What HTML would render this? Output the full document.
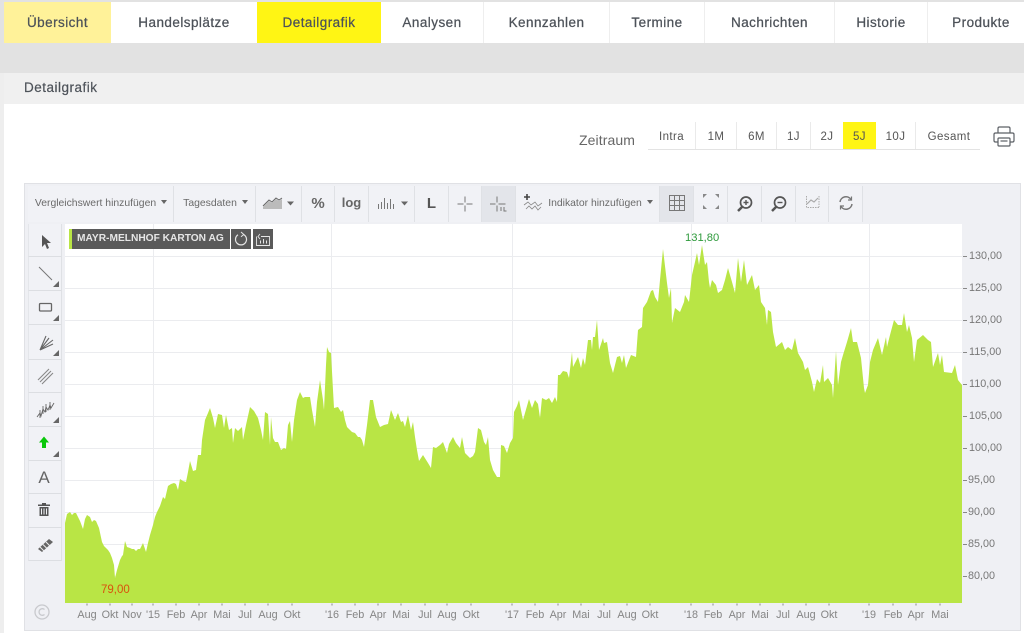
<!DOCTYPE html>
<html lang="de"><head><meta charset="utf-8"><title>Detailgrafik</title>
<style>
*{box-sizing:border-box}
html,body{margin:0;padding:0}
html{background:#fff}
body{width:1024px;height:633px;overflow:hidden;position:relative;background:#fff;font-family:"Liberation Sans",sans-serif;filter:blur(.35px)}
.a{position:absolute}
.tab{position:absolute;top:2px;height:41px;line-height:41px;text-align:center;font-size:13.5px;color:#4d5259;background:#fff;border-right:1px solid #eee;letter-spacing:.45px;-webkit-text-stroke:.25px #4d5259}
.z{position:absolute;top:122px;height:27px;line-height:30px;text-align:center;font-size:11.5px;color:#555;border-right:1px solid #eaeaea;letter-spacing:.4px}
.tb{position:absolute;top:186px;height:36px;background:#f1f2f6;border-right:1px solid #dfe1e5;color:#6a6a6a;font-size:10.4px;line-height:36px;text-align:center;white-space:nowrap}
.car{display:inline-block;width:0;height:0;border-left:3.5px solid transparent;border-right:3.5px solid transparent;border-top:4px solid #666;vertical-align:2px;margin-left:5px}
.lb{position:absolute;left:28px;width:34px;background:#f1f2f6;border-bottom:1px solid #dcdee2;border-right:1px solid #dfe1e5;border-left:1px solid #e4e6ea}
.cor{position:absolute;right:2px;bottom:3px;width:0;height:0;border-left:6px solid transparent;border-bottom:6px solid #666}
.lb svg{position:absolute;left:0;top:0}
.x{position:absolute;top:609px;font-size:10.8px;color:#858585;width:40px;text-align:center;line-height:13px}
.y{position:absolute;left:969px;font-size:10.8px;color:#777;line-height:12px}
</style></head><body>
<div class="a" style="left:0;top:0;width:1024px;height:73px;background:#e2e2e2"></div>
<div class="a" style="left:0;top:2px;width:4px;height:41px;background:#e2e2e2"></div>
<div class="tab" style="left:4px;width:107px;background:#fff299;border:0">Übersicht</div>
<div class="tab" style="left:111px;width:146px;border:0">Handelsplätze</div>
<div class="tab" style="left:257px;width:124px;background:#fff514;border:0">Detailgrafik</div>
<div class="tab" style="left:381px;width:103px">Analysen</div>
<div class="tab" style="left:484px;width:126px">Kennzahlen</div>
<div class="tab" style="left:610px;width:95px">Termine</div>
<div class="tab" style="left:705px;width:130px">Nachrichten</div>
<div class="tab" style="left:835px;width:93px">Historie</div>
<div class="tab" style="left:928px;width:106px;border:0">Produkte</div>

<div class="a" style="left:4px;top:73px;width:1020px;height:31px;background:#f0f0f0;color:#4d5259;font-size:13.5px;line-height:29px;padding-left:20px;letter-spacing:.5px;-webkit-text-stroke:.2px #4d5259">Detailgrafik</div>
<div class="a" style="left:0;top:73px;width:4px;height:560px;background:#eee"></div>

<div class="a" style="left:579px;top:132px;font-size:14px;color:#666;letter-spacing:.1px;line-height:16px">Zeitraum</div>
<div class="a" style="left:648px;top:149px;width:332px;height:1px;background:#e3e3e3"></div>
<div class="z" style="left:648px;width:48px">Intra</div>
<div class="z" style="left:696px;width:41px">1M</div>
<div class="z" style="left:737px;width:40px">6M</div>
<div class="z" style="left:777px;width:34px">1J</div>
<div class="z" style="left:811px;width:32px;border:0">2J</div>
<div class="z" style="left:843px;width:33px;background:#fff514;border:0">5J</div>
<div class="z" style="left:876px;width:40px">10J</div>
<div class="z" style="left:916px;width:66px;border:0">Gesamt</div>
<svg class="a" style="left:992px;top:125px" width="24" height="24" viewBox="0 0 24 24" fill="none" stroke="#5c6066" stroke-width="1.2"><path d="M6 8V3.500Q6 2 7.500 2H16.500Q18 2 18 3.500V8"/><path d="M6 17H3.500Q2 17 2 15.500V9.500Q2 8 3.500 8H20.500Q22 8 22 9.500V15.500Q22 17 20.500 17H18"/><rect x="6" y="13" width="12" height="8" rx="1"/><path d="M8.500 16H15.500"/></svg>

<!-- chart frame -->
<div class="a" style="left:24px;top:183px;width:997px;height:448px;background:#eff0f4;border:1px solid #e0e1e5"></div>

<!-- top toolbar -->
<div class="tb" style="left:28px;width:146px;padding-left:1px">Vergleichswert hinzufügen<i class="car"></i></div>
<div class="tb" style="left:174px;width:82px;padding-left:2px">Tagesdaten<i class="car"></i></div>
<div class="tb" style="left:256px;width:46px"></div>
<svg class="a" style="left:262px;top:194px" width="36" height="20" viewBox="0 0 36 20"><path d="M1 13 7 7 10 9 14 5 17 7 20 5V15H1Z" fill="#bbb"/><path d="M1 12 7 6 10 8 14 4 17 6 20 4" fill="none" stroke="#666" stroke-width="1"/><path d="M25 7.500H32L28.500 11.500Z" fill="#666"/></svg>
<div class="tb" style="left:302px;width:33px;font-size:15px;font-weight:bold;color:#666">%</div>
<div class="tb" style="left:335px;width:34px;font-size:13px;font-weight:bold;color:#666;line-height:33px">log</div>
<div class="tb" style="left:369px;width:46px"></div>
<svg class="a" style="left:376px;top:195px" width="36" height="18" viewBox="0 0 36 18" fill="none" stroke="#777" stroke-width="1"><path d="M2.500 14V9M5.500 14V7M8.500 14V3M11.500 14V8M14.500 14V4M17.500 14V9"/><path d="M25 6.500H32L28.500 10.500Z" fill="#666" stroke="none"/></svg>
<div class="tb" style="left:415px;width:34px;font-size:15px;color:#555;font-weight:bold">L</div>
<div class="tb" style="left:449px;width:33px"></div>
<svg class="a" style="left:456px;top:195px" width="18" height="18" viewBox="0 0 18 18" fill="none" stroke="#777"><path d="M9 1.500V7.500M9 10.500V16.500M1.500 9H7.500M10.500 9H16.500"/></svg>
<div class="tb" style="left:482px;width:34px;background:#e3e5ea"></div>
<svg class="a" style="left:489px;top:195px" width="20" height="18" viewBox="0 0 20 18" fill="none" stroke="#777"><path d="M8 1.500V7.500M8 10.500V16.500M1 9H6.500M9.500 9H16.500M12 12V16M15 12V16H17.500"/></svg>
<div class="tb" style="left:516px;width:144px;padding-left:26px">Indikator hinzufügen<i class="car"></i></div>
<svg class="a" style="left:523px;top:193px" width="20" height="20" viewBox="0 0 20 20" fill="none" stroke="#888" stroke-width=".8"><path d="M4 1V7M1 4H7" stroke="#444" stroke-width="1.600"/><path d="M1 12 5 9 8 12 12 9 15 13 19 10M3 16 6 13 9 16 12 13 15 17 18 14"/></svg>
<div class="tb" style="left:660px;width:34px;background:#e3e5ea"></div>
<svg class="a" style="left:669px;top:195px" width="16" height="16" viewBox="0 0 16 16" fill="none" stroke="#777"><path d="M.5.500H15.500V15.500H.5ZM5.500.500V15.500M10.500.500V15.500M.5 5.500H15.500M.5 10.500H15.500"/></svg>
<div class="tb" style="left:694px;width:34px"></div>
<svg class="a" style="left:701px;top:193px" width="20" height="20" viewBox="0 0 20 20" fill="#888"><path d="M2 1H6L2 5ZM18 1H14L18 5ZM2 16H6L2 12ZM18 16H14L18 12Z" transform="translate(0 0)"/></svg>
<div class="tb" style="left:728px;width:34px"></div>
<svg class="a" style="left:736px;top:195px" width="18" height="18" viewBox="0 0 18 18" fill="none" stroke="#555" stroke-width="1.700"><circle cx="10" cy="7.500" r="5.500"/><path d="M6 12 2 16" stroke-width="2.500"/><path d="M7.500 7.500H12.500M10 5V10" stroke-width="1.400"/></svg>
<div class="tb" style="left:762px;width:34px"></div>
<svg class="a" style="left:770px;top:195px" width="18" height="18" viewBox="0 0 18 18" fill="none" stroke="#555" stroke-width="1.700"><circle cx="10" cy="7.500" r="5.500"/><path d="M6 12 2 16" stroke-width="2.500"/><path d="M7.500 7.500H12.500" stroke-width="1.400"/></svg>
<div class="tb" style="left:796px;width:33px"></div>
<svg class="a" style="left:804px;top:195px" width="17" height="17" viewBox="0 0 17 17" fill="none" stroke="#aaa"><path d="M2.500 1V12.500H15.500" stroke-dasharray="1.500 1"/><path d="M3 9 7 5 10 7 14 3" stroke-width="1.200"/><path d="M15 1V12" stroke-dasharray="1.500 1"/></svg>
<div class="tb" style="left:829px;width:34px"></div>
<svg class="a" style="left:838px;top:195px" width="16" height="16" viewBox="0 0 16 16" fill="none" stroke="#777" stroke-width="1.500"><path d="M2 7A6 6 0 0 1 13 4.500M14 9A6 6 0 0 1 3 11.500"/><path d="M13.500 1.500V5H10M2.500 14.500V11H6" stroke-width="1.200"/></svg>

<!-- plot -->
<div class="a" style="left:65px;top:224px;width:897px;height:379px;background:#fff"></div>
<svg class="a" style="left:0;top:0" width="1024" height="633" viewBox="0 0 1024 633">
<g stroke="#ebecef" stroke-width="1" fill="none">
<path d="M65 256.500H962M65 288.500H962M65 320.500H962M65 352.500H962M65 384.500H962M65 416.500H962M65 448.500H962M65 480.500H962M65 512.500H962M65 544.500H962M65 576.500H962"/>
<path d="M153.500 224V603M331.500 224V603M512.500 224V603M691.500 224V603M869.500 224V603"/>
</g>
<path fill="#b9e545" d="M65 603V523L67 514 70 512 72 515 74 513 76 513 78 517 80 521 83 529 85 519 87 515 90 517 92 522 94 520 96 521 99 528 102 542 104 546 106 548 108 550 110 553 112 558 114 565 115 578 117 570 120 560 122 556 123 555 125 541 127 547 130 548 132 549 134 549 136 551 138 549 140 549 143 543 146 552 148 543 150 535 153 525 155 517 157 512 160 506 163 497 165 499 168 486 171 484 174 483 176 484 178 490 180 479 183 481 186 482 188 472 190 461 193 471 196 470 198 455 201 455 202 440 205 420 208 413 210 408 213 418 215 428 218 414 222 415 224 428 226 415 229 430 232 428 233 443 235 428 238 431 242 427 243 440 246 425 248 416 250 407 254 411 258 418 261 430 263 440 265 412 268 414 270 445 271 417 273 438 275 442 278 442 281 450 284 448 286 449 288 425 290 421 292 442 294 420 297 400 300 392 303 398 305 397 310 397 312 410 315 427 317 402 320 380 323 400 324 410 326 365 327 347 329 352 331 353 333 390 334 408 338 407 341 412 343 410 345 420 347 427 350 430 352 432 355 433 358 437 360 437 362 440 364 447 367 425 370 400 373 400 376 417 380 427 384 425 388 424 391 410 395 420 398 413 401 422 403 421 405 427 408 415 411 430 413 422 415 437 417 450 419 461 423 455 428 463 431 468 433 447 436 448 440 445 443 442 447 453 449 444 453 437 456 443 460 448 462 437 465 453 470 458 473 456 475 452 478 428 481 430 484 442 486 445 488 437 490 460 493 470 497 477 500 477 501 445 504 446 507 453 510 443 513 438 514 412 517 406 519 400 523 420 525 413 529 399 532 408 535 400 538 404 540 418 542 398 546 400 549 398 552 403 555 397 557 402 558 375 560 375 563 371 567 372 569 378 572 352 573 367 575 363 578 357 581 368 583 358 585 365 588 340 591 340 592 350 593 337 595 337 597 320 599 350 603 338 604 343 607 342 610 363 613 373 617 357 620 356 622 363 624 355 626 368 631 355 636 357 638 330 642 327 643 308 647 302 651 291 653 290 655 297 658 302 660 280 663 249 667 283 669 298 671 288 672 323 675 308 680 312 684 302 685 295 689 302 692 275 695 262 697 253 699 265 702 245 705 265 707 262 709 282 710 288 712 280 716 285 718 293 722 290 725 280 728 268 732 282 735 293 738 258 741 282 744 260 747 285 752 275 755 290 759 285 761 302 765 308 767 325 768 310 771 312 773 332 776 347 782 342 785 350 788 347 792 350 795 338 798 353 803 362 805 370 808 367 812 382 814 392 817 379 820 383 823 365 824 382 828 378 832 385 833 398 836 351 838 385 841 362 843 355 847 342 851 328 853 342 857 342 861 358 864 388 865 393 868 385 870 362 873 350 878 338 882 355 886 337 887 347 890 335 894 320 898 325 902 325 904 313 907 332 909 325 912 338 914 362 917 340 923 335 928 340 931 342 933 367 938 353 940 365 942 355 944 372 952 373 955 365 958 380 962 385V603Z"/>
<g stroke="#888" fill="none">
<path d="M87 603.500v2M110 603.500v2M132 603.500v2M153 603.500v2M176 603.500v2M199 603.500v2M222 603.500v2M245 603.500v2M268 603.500v2M292 603.500v2M332 603.500v2M355 603.500v2M378 603.500v2M401 603.500v2M425 603.500v2M447 603.500v2M471 603.500v2M512 603.500v2M535 603.500v2M558 603.500v2M581 603.500v2M604 603.500v2M627 603.500v2M650 603.500v2M691 603.500v2M713 603.500v2M737 603.500v2M760 603.500v2M783 603.500v2M806 603.500v2M829 603.500v2M869 603.500v2M893 603.500v2M916 603.500v2M940 603.500v2"/>
<path d="M963 256.500h4M963 288.500h4M963 320.500h4M963 352.500h4M963 384.500h4M963 416.500h4M963 448.500h4M963 480.500h4M963 512.500h4M963 544.500h4M963 576.500h4"/>
</g>
</svg>

<div class="a" style="left:69px;top:229px;width:3px;height:20px;background:#b9e545"></div>
<div class="a" style="left:72px;top:229px;width:158px;height:20px;background:#5a5a5a;color:#e6e6e6;font-size:10.2px;font-weight:bold;line-height:20px;padding-left:5px;white-space:nowrap">MAYR-MELNHOF KARTON AG</div>
<div class="a" style="left:231px;top:229px;width:20px;height:20px;background:#5a5a5a"></div>
<svg class="a" style="left:233px;top:231px" width="16" height="16" viewBox="0 0 16 16" fill="none" stroke="#e6e6e6" stroke-width="1.200"><path d="M10.500 3.500A5.500 5.500 0 1 1 5 3.800"/><path d="M8 1 10.800 3.500 8 5.800" stroke-width="1"/></svg>
<div class="a" style="left:253px;top:229px;width:20px;height:20px;background:#5a5a5a"></div>
<svg class="a" style="left:255px;top:231px" width="16" height="16" viewBox="0 0 16 16" fill="none" stroke="#e6e6e6"><path d="M1.500 5.500V14.500H14.500V5.500H6M5 3 3 5.500 5 8" stroke-width=".9"/><path d="M5.500 12.500V9.500M8.500 12.500V8M11.500 12.500V9.500"/></svg>

<div class="a" style="left:685px;top:232px;font-size:11.2px;color:#2e9a3c;line-height:13px">131,80</div>
<div class="a" style="left:101px;top:584px;font-size:11.5px;color:#d9530e;line-height:13px">79,00</div>

<!-- left toolbar -->
<div class="lb" style="top:224px;height:33px"><svg width="32" height="32" viewBox="0 0 32 32"><path d="M13 11V23L16 20 18 25 20 24 18 19H22Z" fill="#555"/></svg></div>
<div class="lb" style="top:257px;height:34px"><svg width="32" height="32" viewBox="0 0 32 32"><path d="M10 10 23 23" stroke="#777" fill="none"/></svg><i class="cor"></i></div>
<div class="lb" style="top:291px;height:34px"><svg width="32" height="32" viewBox="0 0 32 32"><rect x="10.500" y="12.500" width="12" height="7.500" rx="1" fill="none" stroke="#666" stroke-width="1.300"/></svg><i class="cor"></i></div>
<div class="lb" style="top:325px;height:35px"><svg width="32" height="32" viewBox="0 0 32 32" fill="none" stroke="#666"><path d="M11 25 17 11M11 25 24 15M11 25 20 13M11 25 24 19" stroke-width="1.100"/></svg><i class="cor"></i></div>
<div class="lb" style="top:360px;height:33px"><svg width="32" height="32" viewBox="0 0 32 32" fill="none" stroke="#888" stroke-width="1.100"><path d="M9 20 20 9M11 22 22 11M13 24 24 13"/></svg></div>
<div class="lb" style="top:393px;height:34px"><svg width="32" height="32" viewBox="0 0 32 32" fill="none" stroke="#666" stroke-width=".9"><path d="M8 24 11 20 12 23 14 16 16 19 17 14 19 17 21 12 22 15 25 10M11 17V25M14 13V21M17 11V19M21 9V17"/></svg><i class="cor"></i></div>
<div class="lb" style="top:427px;height:34px"><svg width="32" height="32" viewBox="0 0 32 32"><path d="M15 9.500 20 15.500H17V21H13V15.500H10Z" fill="#0ac70a"/></svg><i class="cor"></i></div>
<div class="lb" style="top:461px;height:33px;color:#666;font-size:17px;line-height:33px;text-align:center;padding-right:2px">A</div>
<div class="lb" style="top:494px;height:34px"><svg width="32" height="32" viewBox="0 0 32 32" fill="#555"><path d="M9 10.500H21V12H9ZM13 9H17V10.500H13Z"/><path d="M10.500 13H19.500V22H10.500ZM12 14.500V20.500H13V14.500ZM14.500 14.500V20.500H15.500V14.500ZM17 14.500V20.500H18V14.500Z" fill-rule="evenodd"/></svg></div>
<div class="lb" style="top:528px;height:33px"><svg width="32" height="32" viewBox="0 0 32 32" fill="none"><path d="M9 21 20 11 24 14 13 24Z" fill="#666"/><path d="M11 19 15 23M14 16.500 18 20.500M17 14 21 18" stroke="#eee"/></svg></div>

<svg class="a" style="left:33px;top:603px" width="18" height="18" viewBox="0 0 18 18" fill="none" stroke="#c8c9cd" stroke-width="1.300"><circle cx="9" cy="9" r="7"/><path d="M11.500 6.500A3.300 3.300 0 1 0 11.500 11.500"/></svg>

<div class="x" style="left:67px">Aug</div><div class="x" style="left:90px">Okt</div><div class="x" style="left:112px">Nov</div><div class="x" style="left:133px">'15</div><div class="x" style="left:156px">Feb</div><div class="x" style="left:179px">Apr</div><div class="x" style="left:202px">Mai</div><div class="x" style="left:225px">Jul</div><div class="x" style="left:248px">Aug</div><div class="x" style="left:272px">Okt</div><div class="x" style="left:312px">'16</div><div class="x" style="left:335px">Feb</div><div class="x" style="left:358px">Apr</div><div class="x" style="left:381px">Mai</div><div class="x" style="left:405px">Jul</div><div class="x" style="left:427px">Aug</div><div class="x" style="left:451px">Okt</div><div class="x" style="left:492px">'17</div><div class="x" style="left:515px">Feb</div><div class="x" style="left:538px">Apr</div><div class="x" style="left:561px">Mai</div><div class="x" style="left:584px">Jul</div><div class="x" style="left:607px">Aug</div><div class="x" style="left:630px">Okt</div><div class="x" style="left:671px">'18</div><div class="x" style="left:693px">Feb</div><div class="x" style="left:717px">Apr</div><div class="x" style="left:740px">Mai</div><div class="x" style="left:763px">Jul</div><div class="x" style="left:786px">Aug</div><div class="x" style="left:809px">Okt</div><div class="x" style="left:849px">'19</div><div class="x" style="left:873px">Feb</div><div class="x" style="left:896px">Apr</div><div class="x" style="left:920px">Mai</div>

<div class="y" style="top:250px">130,00</div><div class="y" style="top:282px">125,00</div><div class="y" style="top:314px">120,00</div><div class="y" style="top:346px">115,00</div><div class="y" style="top:378px">110,00</div><div class="y" style="top:410px">105,00</div><div class="y" style="top:442px">100,00</div><div class="y" style="top:474px;left:968px">95,00</div><div class="y" style="top:506px;left:968px">90,00</div><div class="y" style="top:538px;left:968px">85,00</div><div class="y" style="top:570px;left:968px">80,00</div>
</body></html>
